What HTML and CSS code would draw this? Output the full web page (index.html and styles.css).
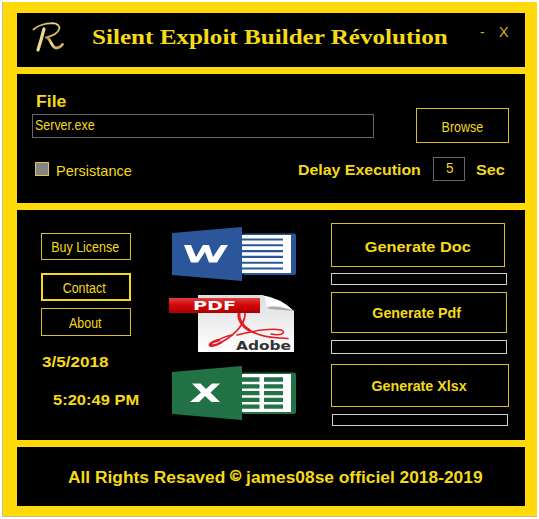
FILE: index.html
```html
<!DOCTYPE html>
<html lang="en">
<head>
<meta charset="utf-8">
<title>Silent Exploit Builder Révolution</title>
<link rel="stylesheet" href="styles.css">
</head>
<body>
<main class="window">
  <header class="panel titlebar">
    <svg class="logo" viewBox="0 0 34 34" width="34" height="34">
      <defs><linearGradient id="gold" x1="0" y1="0" x2="1" y2="1"><stop offset="0" stop-color="#b98a35"/><stop offset=".45" stop-color="#f6e58b"/><stop offset="1" stop-color="#b99a4a"/></linearGradient></defs>
      <g fill="none" stroke="url(#gold)" stroke-linecap="round" stroke-linejoin="round">
        <path stroke-width="1.800" d="M2.500 9.500C7 5 14 3.500 22 3.200C31 4 32 13 15 17.500"/>
        <path stroke-width="3.200" d="M13 9Q10.500 19 7 30"/>
        <path stroke-width="2.800" d="M16 17.500C20 19 20.500 28 25.500 28Q29 28 31.500 24.500"/>
      </g>
    </svg>
    <h1 class="title">Silent Exploit Builder Révolution</h1>
    <span class="minimize">-</span>
    <span class="close">X</span>
  </header>

  <section class="panel settings">
    <div class="file-row">
      <div class="file-field">
        <label class="bold file-label">File</label>
        <div class="input"><span class="narrow input-text">Server.exe</span></div>
      </div>
      <div class="button browse"><span class="narrow">Browse</span></div>
    </div>
    <div class="option-row">
      <span class="checkbox"></span>
      <span class="persist">Persistance</span>
      <span class="bold delay">Delay Execution</span>
      <div class="input seconds"><span class="five">5</span></div>
      <span class="bold sec">Sec</span>
    </div>
  </section>

  <section class="panel builder">
    <div class="side">
      <div class="button small"><span class="narrow">Buy License</span></div>
      <div class="button small active"><span class="narrow">Contact</span></div>
      <div class="button small about"><span class="narrow">About</span></div>
      <span class="bold date">3/5/2018</span>
      <span class="bold time">5:20:49 PM</span>
    </div>

    <div class="formats">
      <svg class="word" width="124" height="54" viewBox="0 0 124 54">
        <path fill="#2b579a" d="M0 6L70 0V54L0 48Z"/>
        <rect x="70" y="6.500" width="54" height="41.500" rx="2.500" fill="#2b579a"/>
        <path fill="#fff" d="M70 8H119V46H70Z"/>
        <path stroke="#2b579a" stroke-width="2.100" d="M70 12.500H111M70 18.300H111M70 24.100H111M70 29.900H111M70 35.700H111M70 41.500H111"/>
        <path fill="#fff" d="M12 18H19L24 30L31 18H37L41 30L49 18H56L45 35.500H37L33 25L26 35.500H19Z"/>
      </svg>
      <svg class="pdf" width="126" height="60" viewBox="0 0 126 60">
        <defs>
          <linearGradient id="sheet" x1="0" y1="0" x2="0" y2="1"><stop offset="0" stop-color="#ddd"/><stop offset="1" stop-color="#fff"/></linearGradient>
          <linearGradient id="banner" x1="0" y1="0" x2="0" y2="1"><stop offset="0" stop-color="#e04040"/><stop offset=".45" stop-color="#d3080c"/><stop offset="1" stop-color="#ac0000"/></linearGradient>
        </defs>
        <path fill="url(#sheet)" d="M29 1H93L125 17V58H29Z"/>
        <path fill="#fff" d="M92 1C99 4 96 9 98 13Q111 11 125 17Q112 4 92 1Z"/>
        <path fill="#aaa" d="M98 13Q111 11 125 17L101 15Z"/>
        <g fill="none" stroke="#e31b23" stroke-linecap="round">
          <path stroke-width="3" d="M70 19C69 25 73 32 80 36"/>
          <path stroke-width="1.700" d="M80 36C88 41 99 43.500 111 44L119 44.500"/>
          <path stroke-width="1.700" d="M76 18C77 28 68 40 52 48.500"/>
          <path stroke-width="2.500" d="M52 48.500C46 52 40 52.500 41 50.500C42 49 46 47 50 46"/>
          <path stroke-width="1.500" d="M50 46C54 43 58 42 63 41M68 41C84 37 101 34 112 36C118 39 112 42 102 40"/>
        </g>
        <rect x="0" y="4" width="91" height="15" fill="url(#banner)"/>
        <text class="pdf-text" x="24" y="16" textLength="43" lengthAdjust="spacingAndGlyphs">PDF</text>
        <text class="adobe-text" x="67" y="56" textLength="55" lengthAdjust="spacingAndGlyphs">Adobe</text>
      </svg>
      <svg class="excel" width="124" height="54" viewBox="0 0 124 54">
        <path fill="#217346" d="M0 6L70 0V54L0 48Z"/>
        <rect x="70" y="6.500" width="54" height="41.500" rx="2.500" fill="#217346"/>
        <path fill="#fff" d="M70 8H119V46H70Z"/>
        <path stroke="#217346" stroke-width="4.300" d="M70 13.500H87.500M92 13.500H111M70 20.300H87.500M92 20.300H111M70 27.100H87.500M92 27.100H111M70 33.900H87.500M92 33.900H111M70 40.700H87.500M92 40.700H111"/>
        <path fill="#fff" d="M20 17.500H28.500L34 23L40 17.500H48L38.500 26.500L48 36H39.500L33 30L27 36H18L29 26.500Z"/>
      </svg>
    </div>

    <div class="generate">
      <div class="button doc"><span class="bold wide">Generate Doc</span></div>
      <div class="progress"></div>
      <div class="button gen-pdf"><span class="bold tight">Generate Pdf</span></div>
      <div class="progress second"></div>
      <div class="button xlsx"><span class="bold tight">Generate Xlsx</span></div>
      <div class="progress third"></div>
    </div>
  </section>

  <footer class="panel footer"><span class="bold rights">All Rights Resaved <span class="copy">©</span> james08se officiel 2018-2019</span></footer>
</main>
</body>
</html>
```
FILE: styles.css
```css
* { box-sizing: border-box; }
body {
  margin: 0;
  background: #fff;
  font: 14px/16px "Liberation Sans", Arial, sans-serif;
  color: #f5da16;
}
.window {
  display: flex;
  flex-direction: column;
  gap: 7px;
  width: 535px;
  height: 515px;
  margin: 2px;
  padding: 11px 12px 11px 14px;
  background: #ffd90a;
  border-left: 1px solid #c9bd8c;
  border-bottom: 1px solid #c9bd8c;
}
.panel { background: #000; display: flex; flex: none; }
span, .title, .file-label {
  display: inline-block;
  flex: none;
  white-space: nowrap;
  transform-origin: 0 50%;
}
.bold { font-weight: bold; font-size: 15px; }
.button {
  display: flex;
  align-items: center;
  justify-content: center;
  border: 1px solid #d9bd26;
}
.button span { transform-origin: 50% 50%; }
.narrow { transform: scaleX(.89); }
.input { border: 1px solid #686868; }

.titlebar { height: 54px; padding-left: 14px; }
.logo { margin-top: 7px; }
.title {
  width: 388px;
  margin: 12px 0 0 27px;
  font: bold 21px/24px "Liberation Serif", "Times New Roman", serif;
  transform: scaleX(1.195);
}
.minimize { width: 19px; margin-top: 11px; color: #cdb52c; }
.close { margin-top: 11px; font-size: 15px; color: #cdb52c; transform: scaleX(.95); }

.settings { height: 129px; flex-direction: column; padding: 20px 16px 0 15px; }
.file-row { display: flex; justify-content: space-between; height: 50px; }
.file-field { width: 342px; }
.file-label { display: block; height: 20px; margin-left: 4px; font-size: 16px; transform: scaleX(1.1); }
.file-field .input { height: 24px; padding: 2px 0 0 2px; }
.browse { width: 93px; height: 35px; margin: 14px 0 0; padding-top: 2px; }
.option-row { display: flex; margin-top: 12px; padding-left: 3px; }
.checkbox { width: 14px; height: 14px; margin-top: 6px; background: #858585; border: 1px solid #dcc85a; }
.persist { width: 243px; margin: 7px 0 0 7px; font-size: 14.5px; }
.delay { width: 134px; margin: 6px 0 0 -1px; transform: scaleX(1.06); }
.seconds { width: 32px; height: 24px; margin: 1px 0 0 1px; padding: 2px 0 0 12px; }
.five { font-size: 15.5px; transform: scaleX(.87); }
.sec { margin: 6px 0 0 11px; transform: scaleX(1.08); }

.builder { height: 230px; padding-left: 24px; }
.side { display: flex; flex-direction: column; width: 128px; padding-top: 23px; }
.small { width: 90px; height: 27px; padding: 1px 2px 0 0; }
.active { margin-top: 13px; border: 2px solid #f5da16; height: 28px; padding-right: 4px; }
.about { margin-top: 7px; height: 28px; }
.date { margin: 18px 0 0 1px; transform: scaleX(1.14); }
.time { margin: 22px 0 0 12px; transform: scaleX(1.1); }
.formats { display: flex; flex-direction: column; width: 162px; padding: 17px 0 0 3px; }
.pdf { margin: 13px 0 0 -3px; }
.excel { margin-top: 12px; }
.pdf-text { fill: #fff; font: bold 12px "DejaVu Sans", sans-serif; }
.adobe-text { fill: #333; font: bold 12px "DejaVu Sans", sans-serif; }
.generate { display: flex; flex-direction: column; padding-top: 13px; }
.doc { width: 174px; height: 44px; padding-top: 4px; }
.wide { transform: scaleX(1.085); }
.tight { transform: scaleX(.95); }
.progress { width: 176px; height: 12px; margin-top: 6px; border: 1px solid #cfcfcf; }
.gen-pdf { width: 176px; height: 41px; margin-top: 7px; padding-right: 4px; }
.second { margin-top: 7px; height: 14px; }
.xlsx { width: 178px; height: 43px; margin-top: 10px; padding-right: 2px; }
.third { margin: 7px 0 0 1px; }

.footer { height: 59px; padding: 23px 0 0 51px; }
.rights { font-size: 16px; transform: scaleX(1.085); }
.copy { font-size: 14px; -webkit-text-stroke: .5px #f5da16; transform: translateY(-2px); }
```
